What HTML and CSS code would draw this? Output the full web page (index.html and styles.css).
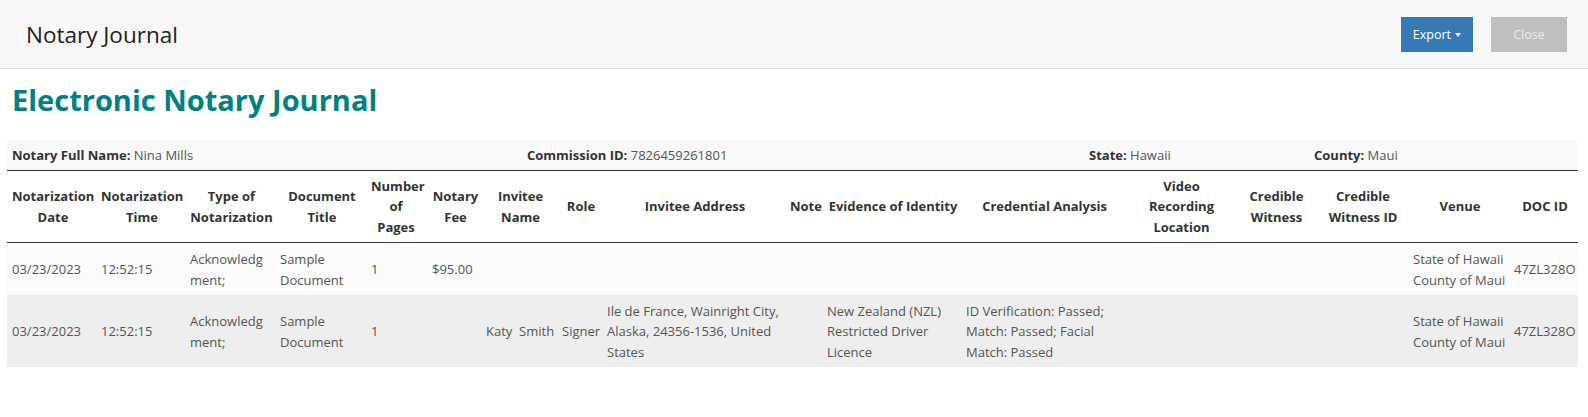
FILE: index.html
```html
<!DOCTYPE html>
<html lang="en">
<head>
<meta charset="utf-8">
<title>Notary Journal</title>
<link rel="stylesheet" href="styles.css">
</head>
<body>
<header class="topbar">
  <h1 class="topbar-title">Notary Journal</h1>
  <div class="topbar-actions">
    <button class="btn btn-export" type="button">Export <span class="caret"></span></button>
    <button class="btn btn-close" type="button">Close</button>
  </div>
</header>
<main class="content">
  <h2 class="journal-title">Electronic Notary Journal</h2>
  <div class="info-bar">
    <div class="info-item"><b>Notary Full Name:</b> Nina Mills</div>
    <div class="info-item"><b>Commission ID:</b> 7826459261801</div>
    <div class="info-item"><b>State:</b> Hawaii</div>
    <div class="info-item"><b>County:</b> Maui</div>
  </div>
  <table class="journal">
    <colgroup>
      <col class="c-date"><col class="c-time"><col class="c-type"><col class="c-title"><col class="c-pages"><col class="c-fee"><col class="c-name"><col class="c-role"><col class="c-addr"><col class="c-note"><col class="c-evid"><col class="c-cred"><col class="c-video"><col class="c-cw"><col class="c-cwid"><col class="c-venue"><col class="c-doc">
    </colgroup>
    <thead>
      <tr>
        <th>Notarization Date</th>
        <th>Notarization Time</th>
        <th>Type of Notarization</th>
        <th>Document Title</th>
        <th class="th-pages">Number of Pages</th>
        <th>Notary Fee</th>
        <th>Invitee Name</th>
        <th>Role</th>
        <th>Invitee Address</th>
        <th>Note</th>
        <th>Evidence of Identity</th>
        <th>Credential Analysis</th>
        <th>Video Recording Location</th>
        <th>Credible Witness</th>
        <th>Credible Witness ID</th>
        <th>Venue</th>
        <th>DOC ID</th>
      </tr>
    </thead>
    <tbody>
      <tr class="row-light">
        <td>03/23/2023</td>
        <td>12:52:15</td>
        <td>Acknowledg<wbr>ment;</td>
        <td>Sample Document</td>
        <td>1</td>
        <td>$95.00</td>
        <td></td>
        <td></td>
        <td></td>
        <td></td>
        <td></td>
        <td></td>
        <td></td>
        <td></td>
        <td></td>
        <td>State of Hawaii County of Maui</td>
        <td>47ZL328O</td>
      </tr>
      <tr class="row-dark">
        <td>03/23/2023</td>
        <td>12:52:15</td>
        <td>Acknowledg<wbr>ment;</td>
        <td>Sample Document</td>
        <td>1</td>
        <td></td>
        <td>Katy&nbsp; Smith</td>
        <td class="td-role">Signer</td>
        <td>Ile de France, Wainright City, Alaska, 24356-1536, United States</td>
        <td></td>
        <td>New Zealand (NZL) Restricted Driver Licence</td>
        <td>ID Verification: Passed; Match: Passed; Facial Match: Passed</td>
        <td></td>
        <td></td>
        <td></td>
        <td>State of Hawaii County of Maui</td>
        <td>47ZL328O</td>
      </tr>
    </tbody>
  </table>
</main>
</body>
</html>
```

FILE: styles.css
```css
* { box-sizing: border-box; }

html, body {
  margin: 0;
  padding: 0;
  background: #ffffff;
  color: #333333;
  font-family: "Open Sans", "Noto Sans", "DejaVu Sans", sans-serif;
}

.topbar {
  display: flex;
  align-items: center;
  justify-content: space-between;
  height: 69px;
  padding: 0 21px 0 26px;
  background: #f7f7f7;
  border-bottom: 1px solid #dddddd;
}

.topbar-title {
  margin: 0;
  font-size: 22.5px;
  font-weight: 400;
  color: #222222;
}

.topbar-actions {
  display: flex;
  gap: 18px;
  align-items: center;
}

.btn {
  height: 35px;
  border: 0;
  border-radius: 0;
  font-family: inherit;
  font-size: 12.5px;
  padding: 0;
  cursor: pointer;
}

.btn-export {
  width: 72px;
  background: #337ab7;
  color: #ffffff;
}

.caret {
  display: inline-block;
  width: 0;
  height: 0;
  margin-left: 1px;
  vertical-align: middle;
  border-top: 4px solid #ffffff;
  border-left: 3px solid transparent;
  border-right: 3px solid transparent;
}

.btn-close {
  width: 76px;
  background: #c0c0c0;
  color: #ececec;
}

.content {
  padding: 0 10px 0 7px;
}

.journal-title {
  margin: 15px 0 0 5px;
  height: 56px;
  font-size: 29px;
  font-weight: 700;
  color: #008080;
  line-height: 32px;
}

.info-bar {
  display: grid;
  grid-template-columns: 515px 562px 225px 1fr;
  background: #f9f9f9;
  border-bottom: 1px solid #333333;
  font-size: 13px;
  line-height: 20px;
}

.info-item {
  padding: 5px;
  color: #555555;
}

.info-item b {
  font-weight: 700;
  color: #333333;
}

.journal {
  width: 100%;
  table-layout: fixed;
  border-collapse: collapse;
  font-size: 13px;
  line-height: 20.4px;
}

.journal th {
  padding: 5px 2px 5px 5px;
  font-weight: 700;
  text-align: center;
  vertical-align: middle;
  color: #333333;
  border-bottom: 1px solid #333333;
}

.journal th.th-pages {
  padding-right: 6px;
}

.journal td {
  padding: 6px 2px 5px 5px;
  vertical-align: middle;
  color: #555555;
  overflow-wrap: anywhere;
}

.journal td.td-role {
  padding-right: 0;
  white-space: nowrap;
}

.row-light td { background: #fbfbfb; }
.row-dark td { background: #eeeeee; }

.c-date { width: 89px; }
.c-time { width: 89px; }
.c-type { width: 90px; }
.c-title { width: 91px; }
.c-pages { width: 61px; }
.c-fee { width: 54px; }
.c-name { width: 76px; }
.c-role { width: 45px; }
.c-addr { width: 183px; }
.c-note { width: 37px; }
.c-evid { width: 139px; }
.c-cred { width: 164px; }
.c-video { width: 110px; }
.c-cw { width: 80px; }
.c-cwid { width: 93px; }
.c-venue { width: 101px; }
.c-doc { width: auto; }
```
